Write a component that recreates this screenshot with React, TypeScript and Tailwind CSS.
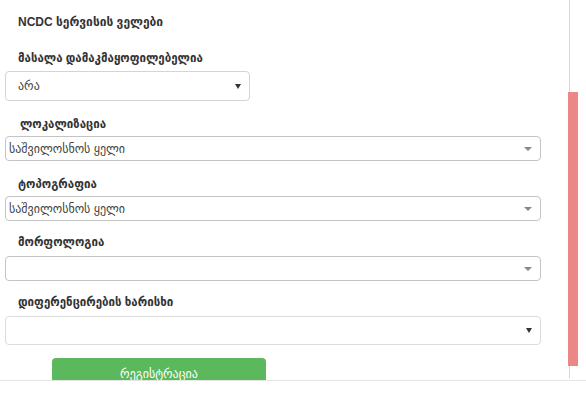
import React from "react";

const Arrow = ({ dark }: { dark?: boolean }) => (
  <span
    className={
      dark
        ? "w-0 h-0 border-l-[3px] border-r-[3px] border-t-[5px] border-l-transparent border-r-transparent border-t-[#333]"
        : "w-0 h-0 border-l-[4px] border-r-[4px] border-t-[4px] border-l-transparent border-r-transparent border-t-[#888]"
    }
  />
);

const Label = ({ children, className = "" }: { children: React.ReactNode; className?: string }) => (
  <div className={"pl-[18px] text-[11.5px] leading-[16px] font-bold text-[#333] " + className}>{children}</div>
);

const Field = ({
  value,
  className,
  dark,
}: {
  value?: string;
  className: string;
  dark?: boolean;
}) => (
  <div
    className={
      "ml-[5px] flex items-center justify-between bg-white rounded-[4px] border " + className
    }
  >
    <span className="text-[12px] text-[#444]">{value}</span>
    <Arrow dark={dark} />
  </div>
);

export default function App() {
  return (
    <div className="w-[586px] h-[398px] bg-white overflow-hidden font-['Liberation_Sans','DejaVu_Sans',sans-serif]">
      <div className="flex h-[381px] border-b border-[#e6e6e6]">
        <div className="flex-1 overflow-hidden pt-[14px]">
          <div className="pl-[18px] text-[12px] leading-[16px] font-bold text-[#333]">NCDC სერვისის ველები</div>
          <Label className="mt-[20px]">მასალა დამაკმაყოფილებელია</Label>
          <Field
            value="არა"
            dark
            className="mt-[5px] w-[245px] h-[30px] pl-[12px] pr-[8px] border-[#d4d4d4]"
          />
          <Label className="mt-[15px] pl-[20px]">ლოკალიზაცია</Label>
          <Field
            value="საშვილოსნოს ყელი"
            className="mt-[4px] w-[536px] h-[25px] pl-[3px] pr-[8px] border-[#c4c4c4]"
          />
          <Label className="mt-[15px]">ტოპოგრაფია</Label>
          <Field
            value="საშვილოსნოს ყელი"
            className="mt-[4px] w-[536px] h-[25px] pl-[3px] pr-[8px] border-[#c4c4c4]"
          />
          <Label className="mt-[13px]">მორფოლოგია</Label>
          <Field className="mt-[6px] w-[536px] h-[25px] pl-[3px] pr-[8px] border-[#c4c4c4]" />
          <Label className="mt-[13px]">დიფერენცირების ხარისხი</Label>
          <Field dark className="mt-[6px] w-[536px] h-[29px] pl-[3px] pr-[8px] border-[#dcdcdc]" />
          <div className="ml-[52px] mt-[13px] w-[214px] h-[30px] rounded-t-[4px] bg-[#5cb85c] text-white text-[12px] flex justify-center pt-[7px]">
            რეგისტრაცია
          </div>
        </div>
        <div className="w-[10px] flex flex-col">
          <div className="h-[92px] ml-[1px] w-[1px] bg-[#f2cccc]" />
          <div className="h-[274px] bg-[#eb8787]" />
          <div className="h-[12px] ml-[1px] w-[1px] bg-[#f2cccc]" />
        </div>
        <div className="w-[8px]" />
      </div>
    </div>
  );
}
